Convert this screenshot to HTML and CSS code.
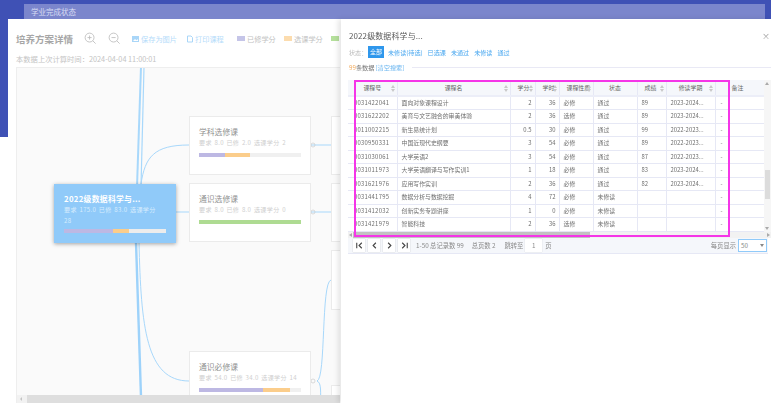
FILE: index.html
```html
<!DOCTYPE html>
<html lang="zh-CN">
<head>
<meta charset="utf-8">
<title>学业完成状态</title>
<link rel="stylesheet" href="styles.css">
</head>
<body>
<div class="app">
  <header class="topbar"><div class="tab">学业完成状态</div></header>
  <div class="body-row">
    <div class="rail"></div>
    <main class="sheet">
      <div class="tools">
        <h1 class="page-title">培养方案详情</h1>
        <svg class="zoom-ic" viewBox="0 0 14 14"><circle cx="6" cy="6" r="4.8"/><path d="M6 3.8v4.4M3.8 6h4.4M9.5 9.5l3 3"/></svg>
        <svg class="zoom-ic" viewBox="0 0 14 14"><circle cx="6" cy="6" r="4.8"/><path d="M3.8 6h4.4M9.5 9.5l3 3"/></svg>
        <span class="tool-link save"><svg class="small-ic" viewBox="0 0 8 8"><rect width="7" height="6" y="1" fill="#a9d6f8"/><path d="M1 6l2-2 1.5 1.3L6 4v2z" fill="#fff"/></svg>保存为图片</span>
        <span class="tool-link print"><svg class="small-ic" viewBox="0 0 8 8"><path d="M1.5 1h3.5l1.5 1.5V7h-5z" fill="none" stroke="#a9d6f8"/></svg>打印课程</span>
        <span class="legend"><i class="sw purple"></i>已修学分</span>
        <span class="legend"><i class="sw orange"></i>选课学分</span>
        <span class="legend last"><i class="sw green"></i>修</span>
      </div>
      <p class="calc-time">本数据上次计算时间：2024-04-04 11:00:01</p>
      <section class="canvas">
        <svg class="wires" viewBox="0 0 324 336" width="324" height="336" fill="none" stroke="#a8d8fb">
          <path d="M125 0 L121 120" stroke-width="2"/>
          <path d="M128 0 L125 120" stroke-width="1.2"/>
          <path d="M125 117 C129 90 138 78 173 78" stroke-width="1"/>
          <path d="M159 145 H173" stroke-width="1"/>
          <path d="M120 175 L125 330" stroke-width="2.4" stroke="#9dd2fa"/>
          <path d="M123 175 C125 260 130 314 173 314" stroke-width="1"/>
          <path d="M294 78 h21M294 145 h21" stroke-width="1"/>
          <path d="M301 314 C310 312 305 215 315 213M301 314 C306 316 304 326 305 336" stroke-width="1"/>
          <circle cx="297" cy="78" r="2" stroke="#ccc" stroke-width=".7"/>
          <circle cx="297" cy="145" r="2" stroke="#ccc" stroke-width=".7"/>
          <circle cx="297" cy="314" r="2" stroke="#ccc" stroke-width=".7"/>
        </svg>

        <div class="node root">
          <h3>2022级数据科学与...</h3>
          <p>要求 175.0 已修 83.0 选课学分 28</p>
          <div class="bar"><i class="b-purple" style="width:48%"></i><i class="b-orange" style="width:16%"></i></div>
        </div>
        <div class="node n1">
          <h3>学科选修课</h3>
          <p>要求 8.0 已修 2.0 选课学分 2</p>
          <div class="bar"><i class="b-purple" style="width:25%"></i><i class="b-orange" style="width:25%"></i></div>
        </div>
        <div class="node n2">
          <h3>通识选修课</h3>
          <p>要求 8.0 已修 8.0 选课学分 0</p>
          <div class="bar"><i class="b-green" style="width:100%"></i></div>
        </div>
        <div class="node n3">
          <h3>通识必修课</h3>
          <p>要求 54.0 已修 34.0 选课学分 14</p>
          <div class="bar"><i class="b-purple" style="width:63%"></i><i class="b-orange" style="width:26%"></i></div>
        </div>
        <div class="node r1"></div>
        <div class="node r2"></div>
        <div class="node r3"></div>
        <div class="node r4"></div>
        <div class="hbar"><span class="arrow-l"></span><div class="hthumb"></div></div>
      </section>
    </main>
  </div>

  <aside class="drawer">
    <div class="drawer-head"><h2>2022级数据科学与...</h2><span class="close">×</span></div>
    <div class="filters">
      <span class="f-label">状态：</span>
      <span class="f-btn active">全部</span>
      <span class="f-btn">未修读(待选)</span>
      <span class="f-btn">已选课</span>
      <span class="f-btn">未通过</span>
      <span class="f-btn">未修读</span>
      <span class="f-btn">通过</span>
    </div>
    <div class="count-row"><b>99</b><span>条数据</span><a>[清空搜索]</a><i class="rule"></i></div>
    <div class="grid-wrap">
      <table class="grid">
        <colgroup><col class="c1"><col class="c2"><col class="c3"><col class="c4"><col class="c5"><col class="c6"><col class="c7"><col class="c8"><col class="c9"><col class="c10"></colgroup>
        <thead>
          <tr>
            <th><span class="th-l">课程号</span><i class="sort"></i></th>
            <th><span class="th-l">课程名</span><i class="sort"></i></th>
            <th class="tight"><span class="th-l">学分</span><i class="sort"></i></th>
            <th class="tight"><span class="th-l">学时</span><i class="sort"></i></th>
            <th class="tight"><span class="th-l">课程性质</span><i class="sort"></i></th>
            <th><span class="th-l">状态</span></th>
            <th class="tight"><span class="th-l">成绩</span><i class="sort"></i></th>
            <th><span class="th-l">修读学期</span><i class="sort"></i></th>
            <th></th>
            <th class="left"><span class="th-l">备注</span></th>
          </tr>
        </thead>
        <tbody>
          <tr><td>0031422041</td><td>面向对象课程设计</td><td class="num">2</td><td class="num">36</td><td>必修</td><td>通过</td><td>89</td><td>2023-2024...</td><td class="dash">-</td><td></td></tr>
          <tr><td>0031622202</td><td>美育与文艺融合的审美体验</td><td class="num">2</td><td class="num">36</td><td>选修</td><td>通过</td><td>89</td><td>2023-2024...</td><td class="dash">-</td><td></td></tr>
          <tr><td>0011002215</td><td>新生易统计划</td><td class="num">0.5</td><td class="num">30</td><td>必修</td><td>通过</td><td>99</td><td>2022-2023...</td><td class="dash">-</td><td></td></tr>
          <tr><td>0030950331</td><td>中国近现代史纲要</td><td class="num">3</td><td class="num">54</td><td>必修</td><td>通过</td><td>89</td><td>2022-2023...</td><td class="dash">-</td><td></td></tr>
          <tr><td>0031030061</td><td>大学英语2</td><td class="num">3</td><td class="num">54</td><td>必修</td><td>通过</td><td>87</td><td>2022-2023...</td><td class="dash">-</td><td></td></tr>
          <tr><td>0031011973</td><td>大学英语翻译与写作实训1</td><td class="num">1</td><td class="num">18</td><td>必修</td><td>通过</td><td>83</td><td>2023-2024...</td><td class="dash">-</td><td></td></tr>
          <tr><td>0031621976</td><td>应用写作实训</td><td class="num">2</td><td class="num">36</td><td>必修</td><td>通过</td><td>82</td><td>2023-2024...</td><td class="dash">-</td><td></td></tr>
          <tr><td>0031441795</td><td>数据分析与数据挖掘</td><td class="num">4</td><td class="num">72</td><td>必修</td><td>未修读</td><td></td><td></td><td class="dash">-</td><td></td></tr>
          <tr><td>0031412032</td><td>创新实务专题讲座</td><td class="num">1</td><td class="num">0</td><td>必修</td><td>未修读</td><td></td><td></td><td class="dash">-</td><td></td></tr>
          <tr><td>0031421979</td><td>智能科技</td><td class="num">2</td><td class="num">36</td><td>选修</td><td>未修读</td><td></td><td></td><td class="dash">-</td><td></td></tr>
        </tbody>
      </table>
      <div class="vbar"><span class="tri-up"></span><div class="vthumb"></div><span class="tri-down"></span></div>
      <div class="tbar"><span class="tri-left"></span><div class="tthumb"></div><span class="tri-right"></span></div>
    </div>
    <div class="pager">
      <div class="pg-btn"><svg viewBox="0 0 12 12"><path d="M3 3v6M8.5 3L5.5 6l3 3"/></svg></div>
      <div class="pg-btn"><svg viewBox="0 0 12 12"><path d="M7.5 3L4.5 6l3 3"/></svg></div>
      <div class="pg-btn"><svg viewBox="0 0 12 12"><path d="M4.5 3l3 3-3 3"/></svg></div>
      <div class="pg-btn"><svg viewBox="0 0 12 12"><path d="M3.5 3l3 3-3 3M9 3v6"/></svg></div>
      <span class="pg-t range">1-50 总记录数 99</span>
      <span class="pg-t pages">总页数 2</span>
      <span class="pg-t jump">跳转至</span>
      <span class="pg-input">1</span>
      <span class="pg-t">页</span>
      <span class="pg-t per">每页显示</span>
      <span class="pg-select">50<i></i></span>
    </div>
    <div class="pink"></div>
  </aside>
</div>
</body>
</html>
```

FILE: styles.css
```css
* { box-sizing: border-box; }
html, body { margin: 0; padding: 0; }
body { width: 771px; height: 403px; overflow: hidden; background: #fff; font-family: "Noto Sans CJK SC", "Noto Sans", sans-serif; }
h1, h2, h3, p { margin: 0; font-weight: normal; }
i { font-style: normal; }

.app { position: relative; width: 771px; height: 403px; overflow: hidden; filter: blur(0.35px); }

.topbar { height: 19px; background: #3f51b5; padding: 4px 6px 0 24px; }
.tab { height: 15px; background: #7b86cc; color: #d9ddf3; font-size: 7.5px; line-height: 15px; padding-left: 7px; }

.body-row { display: flex; height: 384px; }
.rail { width: 8px; height: 118px; background: #3f51b5; flex: none; }
.sheet { width: 333px; flex: none; padding: 0 0 0 8px; background: #fff; overflow: hidden; }

.tools { position: relative; height: 35px; display: flex; align-items: center; padding-top: 4px; }
.page-title { font-size: 9.5px; font-weight: 700; color: #a6a6a6; width: 63px; flex: none; margin-right: 5px; white-space: nowrap; }
.zoom-ic { width: 13px; height: 13px; fill: none; stroke: #bbb; stroke-width: .9; margin-right: 11px; flex: none; }
.tool-link, .legend { font-size: 7.2px; white-space: nowrap; display: inline-flex; align-items: center; flex: none; }
.tool-link { color: #b5dcfa; }
.small-ic { width: 8px; height: 8px; margin-right: 1px; }
.save { width: 54px; }
.print { width: 51px; }
.legend { color: #c2c2c2; width: 47px; }
.legend.last { width: 18px; }
.sw { width: 8px; height: 5px; margin-right: 2px; }
.purple { background: #c5c5e8; }
.orange { background: #fcdcae; }
.green { background: #b5e09c; }

.calc-time { font-size: 7.3px; color: #c4c4c4; height: 13px; line-height: 10px; white-space: nowrap; }

.canvas { position: relative; width: 324px; height: 336px; background: #fafafa; border-left: 1px solid #eee; border-top: 1px solid #eee; overflow: hidden; }
.wires { position: absolute; left: -1px; top: -1px; }

.node { position: absolute; width: 122px; height: 59px; background: #fff; border: 1px solid #ebebeb; padding: 9px 9px 0; }
.node h3 { font-size: 7.8px; line-height: 12px; color: #8f8f8f; white-space: nowrap; }
.node p { font-size: 6.1px; line-height: 10.5px; color: #cfcfcf; letter-spacing: .3px; word-spacing: 1px; }
.node .bar { display: flex; height: 4px; margin-top: 4px; background: #f0f0f0; }
.b-purple { background: #bdb8e3; }
.b-orange { background: #fbcd8b; }
.b-green { background: #aedb92; }

.root { left: 37px; top: 116px; background: #90caf9; border: 0; padding: 9px 10px 0; box-shadow: 0 1px 4px rgba(0,0,0,.35); }
.root h3 { color: #fff; font-weight: 700; letter-spacing: .3px; }
.root p { color: #d7ecfd; max-width: 94px; }
.root .bar { background: #ececec; margin-top: 3px; }
.n1 { left: 172px; top: 48px; }
.n2 { left: 172px; top: 115px; }
.n3 { left: 172px; top: 283px; height: 70px; }
.r1 { left: 314px; top: 48px; }
.r2 { left: 314px; top: 115px; }
.r3 { left: 314px; top: 182px; height: 60px; }
.r4 { left: 314px; top: 317px; }

.hbar { position: absolute; left: 0; bottom: 0; width: 100%; height: 8px; background: #f2f2f2; }
.hthumb { position: absolute; left: 10px; right: 0; top: 0; bottom: 0; background: #dedede; }
.arrow-l { position: absolute; left: 3px; top: 2px; border: 2px solid transparent; border-right: 2px solid #c4c4c4; border-left: 0; }

.drawer { position: absolute; left: 341px; top: 19px; width: 430px; height: 384px; background: #fff; box-shadow: -3px 0 5px rgba(0,0,0,.1); padding-left: 7px; color: #666; }
.drawer-head { height: 23px; display: flex; align-items: center; justify-content: space-between; padding: 10px 0 0 1px; }
.drawer-head h2 { font-size: 8px; color: #5a5a5a; letter-spacing: .1px; }
.close { font-size: 8px; line-height: 8px; color: #999; margin-right: 1px; }
.filters { height: 14px; margin-top: 3px; display: flex; align-items: center; font-size: 6.1px; color: #bbb; padding-left: 1px; }
.f-label { width: 19px; }
.f-btn { color: #4aa8f0; margin-right: 5px; white-space: nowrap; }
.f-btn.active { background: #2f97ec; color: #fff; height: 12px; line-height: 12px; width: 16px; text-align: center; margin-right: 4px; }
.count-row { display: flex; align-items: center; height: 12px; margin-top: 2px; font-size: 6.2px; color: #777; padding-left: 1px; }
.count-row b { font-weight: normal; color: #f2ad62; }
.count-row a { color: #6bb6f0; margin-left: 1px; white-space: nowrap; }
.rule { flex: 1; height: 1px; background: #e9e9f5; margin-left: 8px; }

.grid-wrap { position: relative; width: 423px; height: 158px; margin-top: 7px; overflow: hidden; }
.grid { border-collapse: collapse; table-layout: fixed; width: 416px; font-size: 5.9px; color: #707070; }
.c1 { width: 49px; } .c2 { width: 113px; } .c3 { width: 25px; } .c4 { width: 24px; } .c5 { width: 34px; }
.c6 { width: 44px; } .c7 { width: 29px; } .c8 { width: 49px; } .c9 { width: 14px; } .c10 { width: 35px; }
.grid th { position: relative; height: 16px; background: #f5f7fb; font-weight: normal; color: #666; border-right: 1px solid #e6e8f5; border-bottom: 2px solid #eceef8; padding: 0; text-align: center; }
.th-l { white-space: nowrap; }
.grid th.tight { text-align: left; padding-left: 7px; }
.grid th.left { text-align: left; padding-left: 2px; }
.sort { position: absolute; right: 1px; top: 5px; width: 5px; height: 7px; }
.sort::before, .sort::after { content: ""; position: absolute; left: 0; border-left: 2.5px solid transparent; border-right: 2.5px solid transparent; }
.sort::before { top: 0; border-bottom: 3px solid #c9c9c9; }
.sort::after { bottom: 0; border-top: 3px solid #c9c9c9; }
.grid td { height: 13.5px; padding: 0 0 0 4px; border-right: 1px solid #e6e8f5; border-bottom: 1px solid #e6e8f5; white-space: nowrap; overflow: hidden; line-height: 12px; }
.grid td:first-child { padding-left: 6px; letter-spacing: .25px; }
.grid td.num { text-align: right; padding-right: 3px; padding-left: 0; }
.grid td.dash { padding-left: 5px; }

.vbar { position: absolute; right: 0; top: 0; width: 7px; height: 152px; background: #f6f6f6; }
.vthumb { position: absolute; left: 1px; width: 5px; top: 90px; height: 29px; background: #dcdcdc; }
.tri-up { position: absolute; left: 1px; top: 2px; border-left: 2.5px solid transparent; border-right: 2.5px solid transparent; border-bottom: 3px solid #aaa; }
.tri-down { position: absolute; left: 1px; bottom: 2px; border-left: 2.5px solid transparent; border-right: 2.5px solid transparent; border-top: 3px solid #aaa; }
.tbar { position: absolute; left: 0; top: 152px; width: 423px; height: 6px; background: #f2f2f2; }
.tthumb { position: absolute; left: 5px; width: 237px; height: 6px; background: #c2c2c2; }
.tri-left { position: absolute; left: 1px; top: 1px; border-top: 2px solid transparent; border-bottom: 2px solid transparent; border-right: 3px solid #aaa; }
.tri-right { position: absolute; right: 1px; top: 1px; border-top: 2px solid transparent; border-bottom: 2px solid transparent; border-left: 3px solid #aaa; }

.pager { width: 420px; height: 16px; background: #f5f7fb; border-bottom: 1px solid #e6e8f5; display: flex; align-items: center; padding-left: 5px; font-size: 6.3px; color: #8a8a8a; }
.pg-btn { width: 12px; height: 13px; background: #fff; margin-right: 3px; box-shadow: 0 0 1px rgba(0,0,0,.25); display: flex; align-items: center; justify-content: center; }
.pg-btn svg { width: 11px; height: 11px; fill: none; stroke: #444; stroke-width: 1.2; }
.pg-t { white-space: nowrap; }
.range { margin-left: 3px; }
.pages { margin-left: 8px; }
.jump { margin-left: 9px; }
.pg-input { width: 17px; height: 13px; background: #fff; box-shadow: 0 0 1px rgba(0,0,0,.2); text-align: center; line-height: 13px; margin: 0 3px 0 2px; }
.per { margin-left: auto; margin-right: 2px; margin-top: -1px; }
.pg-select { position: relative; width: 29px; height: 13px; margin-right: 1px; background: #fff; border: 1px solid #90caf9; line-height: 11px; padding-left: 2px; }
.pg-select i { position: absolute; right: 2px; top: 4px; border-left: 2.5px solid transparent; border-right: 2.5px solid transparent; border-top: 3px solid #888; }

.pink { position: absolute; left: 13px; top: 61px; width: 376px; height: 157px; border: 2px solid #f535e8; pointer-events: none; }
```
